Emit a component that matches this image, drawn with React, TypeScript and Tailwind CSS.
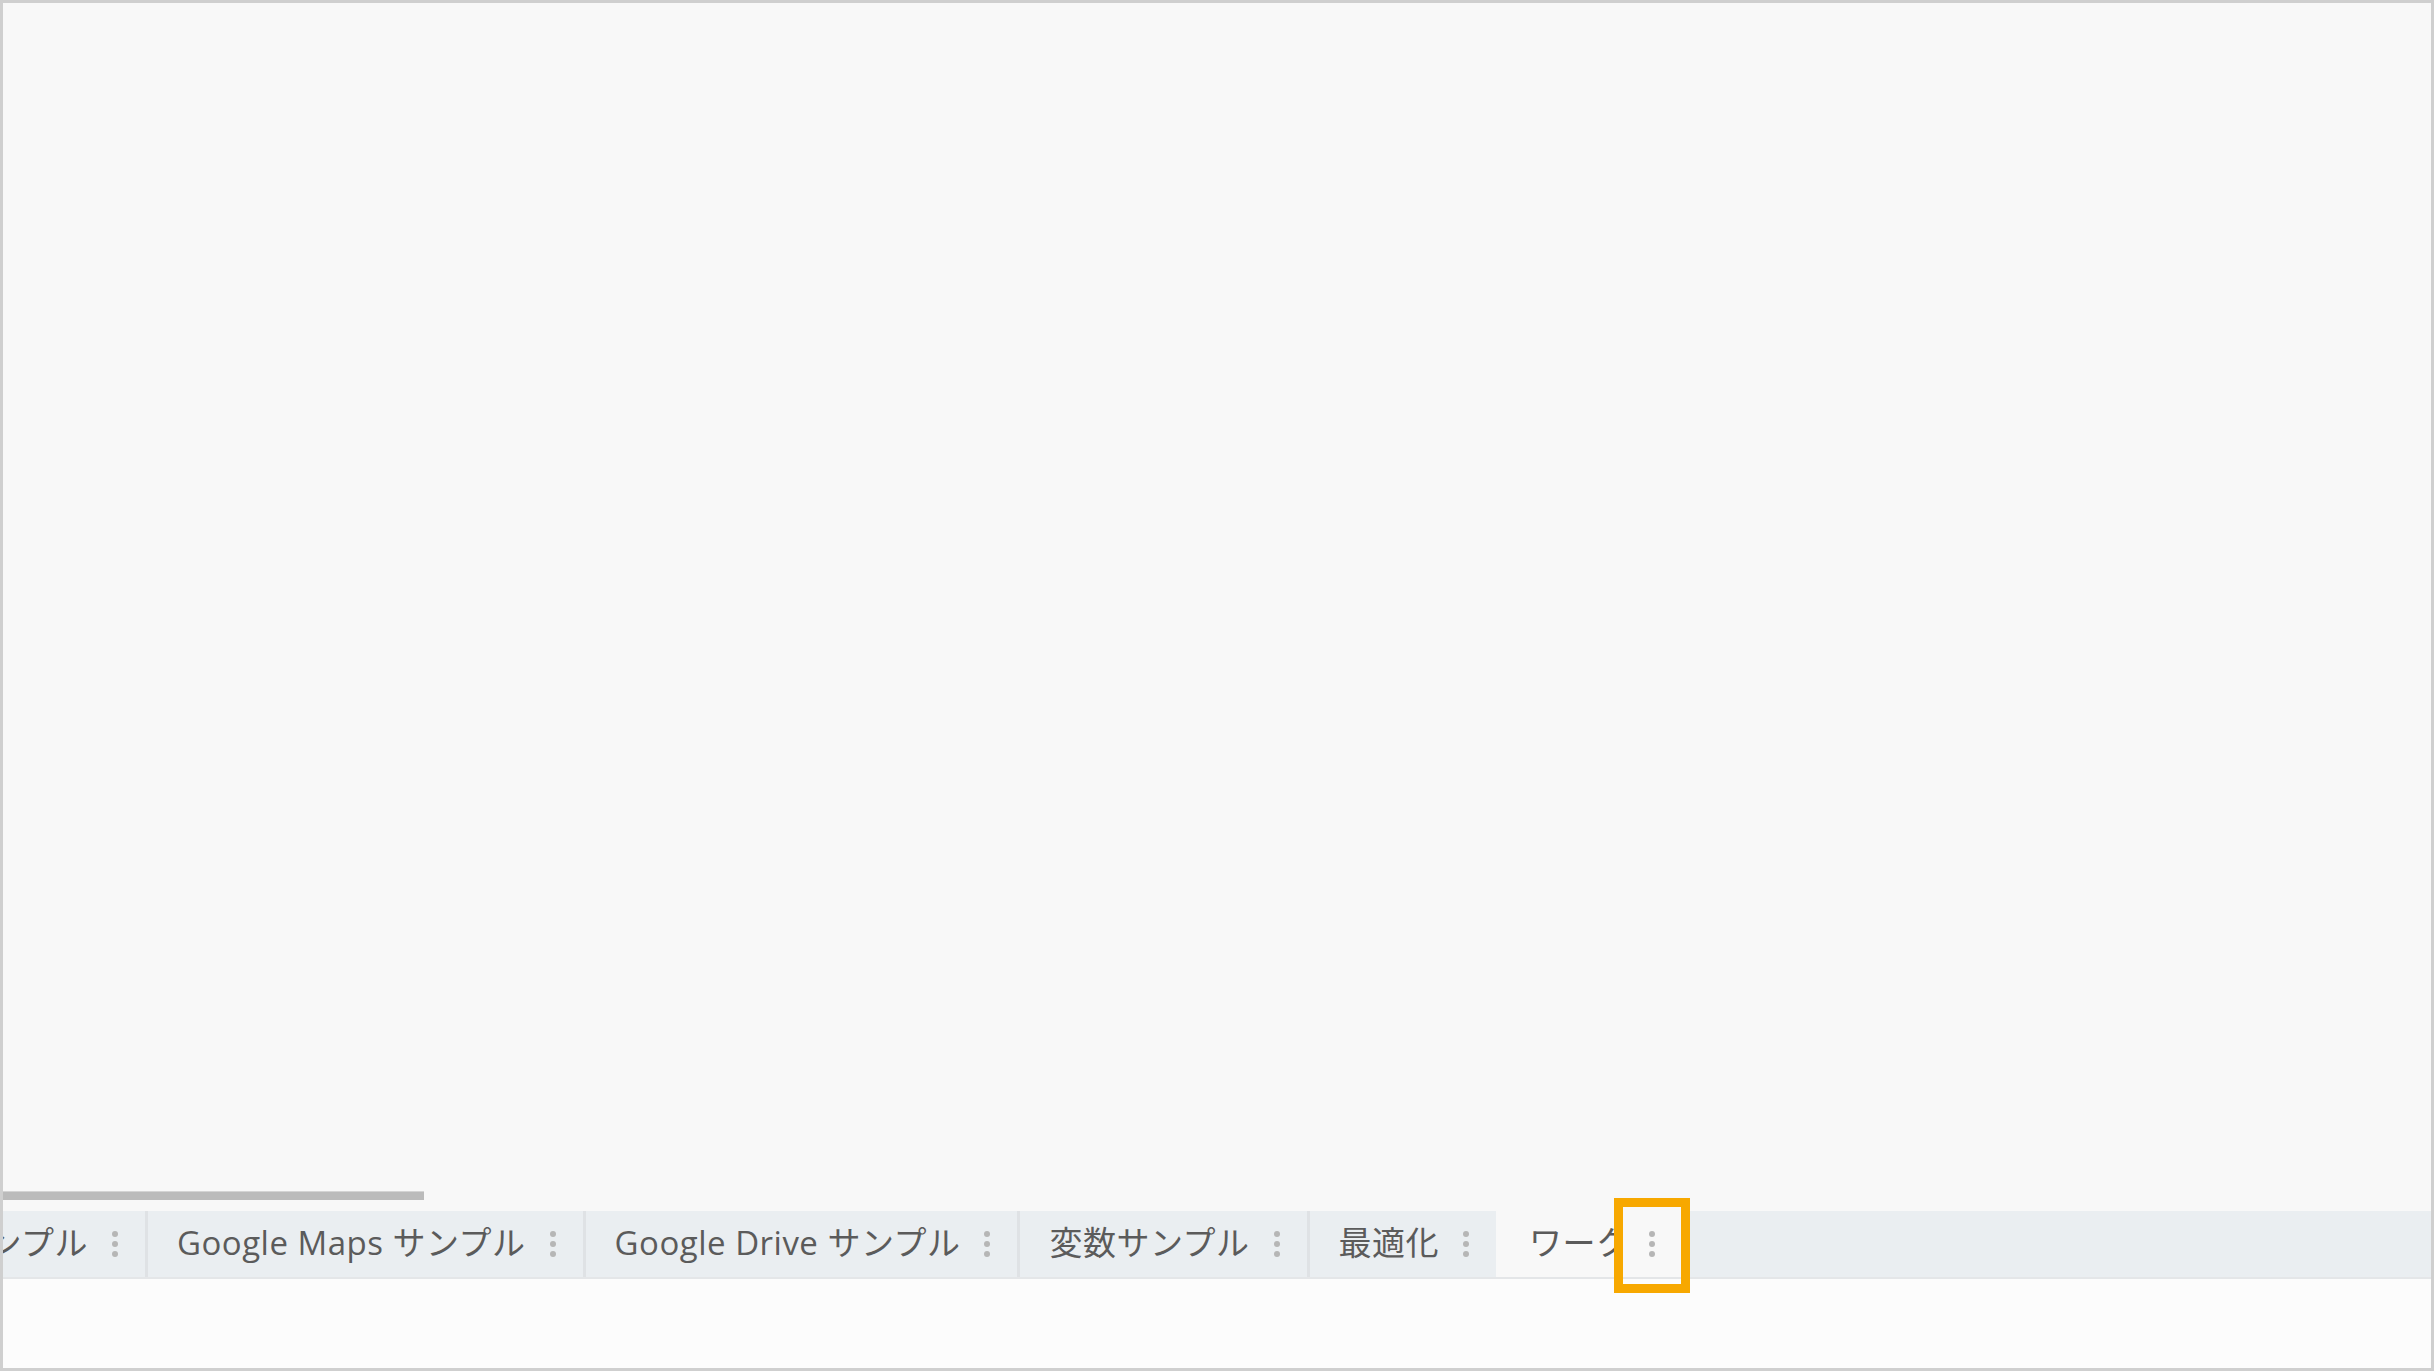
import React from "react";

const font = { fontFamily: '"Open Sans", "Noto Sans CJK JP", sans-serif' };

function Dots() {
  return (
    <div className="flex flex-col gap-[4px] shrink-0">
      <span className="block w-[6px] h-[6px] rounded-full bg-[#b6b6b6]" />
      <span className="block w-[6px] h-[6px] rounded-full bg-[#b6b6b6]" />
      <span className="block w-[6px] h-[6px] rounded-full bg-[#b6b6b6]" />
    </div>
  );
}

function Label({ children, className = "" }: { children: React.ReactNode; className?: string }) {
  return (
    <span className={`text-[33px] leading-none tracking-[0.5px] text-[#5b5b5b] whitespace-nowrap pb-[4px] ${className}`}>
      {children}
    </span>
  );
}

function Tab({ title }: { title: string }) {
  return (
    <div className="flex items-stretch shrink-0">
      <div className="w-[3px] bg-[#dfe2e5]" />
      <div className="flex items-center gap-[24px] pl-[29px] pr-[27px]">
        <Label>{title}</Label>
        <Dots />
      </div>
    </div>
  );
}

export default function App() {
  const tabs = ["Google Maps サンプル", "Google Drive サンプル", "変数サンプル", "最適化"];

  return (
    <div
      className="w-[2434px] h-[1371px] border-[3px] border-[#cfcfcf] bg-[#f8f8f8] flex flex-col overflow-hidden"
      style={font}
    >
      {/* canvas */}
      <div className="flex-1" />

      {/* horizontal scrollbar */}
      <div className="h-[9px]">
        <div className="w-[421px] h-full bg-[#bbbbbb] border-t border-[#d4d4d4]" />
      </div>
      <div className="h-[11px]" />

      {/* sheet tabs */}
      <div className="h-[68px] flex items-stretch bg-[#eaeef1] border-b-2 border-[#e4e6e8]">
        <div className="w-[142px] shrink-0 overflow-hidden flex justify-end">
          <div className="flex items-center gap-[24px] pr-[27px] shrink-0">
            <Label>基本サンプル</Label>
            <Dots />
          </div>
        </div>
        {tabs.map((t) => (
          <Tab key={t} title={t} />
        ))}
        <div className="relative flex items-center gap-[32px] pl-[33px] pr-[30px] bg-[#f8f8f8] shrink-0">
          <Label className="w-[88px] overflow-hidden">ワークシート</Label>
          <Dots />
          <div className="absolute left-[118px] top-[-13px] w-[76px] h-[95px] border-[9px] border-[#f7a800]" />
        </div>
        <div className="flex-1" />
      </div>

      {/* footer */}
      <div className="h-[89px] bg-[#fcfcfc]" />
    </div>
  );
}
